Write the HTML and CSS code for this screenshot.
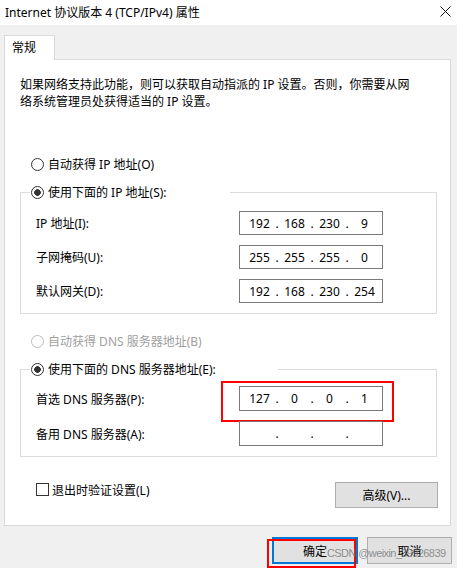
FILE: index.html
```html
<!DOCTYPE html>
<html lang="zh-CN">
<head>
<meta charset="utf-8">
<title>Internet 协议版本 4 (TCP/IPv4) 属性</title>
<link rel="stylesheet" href="styles.css">
</head>
<body>
<div class="window">
  <div class="titlebar">
    <span class="title">Internet 协议版本 4 (TCP/IPv4) 属性</span>
    <svg class="close" width="11" height="11" viewBox="0 0 11 11"><path d="M0.5 0.5 L10.5 10.5 M10.5 0.5 L0.5 10.5" stroke="#111" stroke-width="1" fill="none"/></svg>
  </div>
  <div class="tabs"><div class="tab">常规</div></div>
  <div class="panel">
    <p class="desc">如果网络支持此功能，则可以获取自动指派的 IP 设置。否则，你需要从网<br>络系统管理员处获得适当的 IP 设置。</p>
    <div class="radio-row"><span class="radio"></span>自动获得 IP 地址(O)</div>
    <fieldset class="group group-ip">
      <legend class="legend legend-ip"><span class="radio checked"></span>使用下面的 IP 地址(S):</legend>
      <div class="field-row"><span class="label">IP 地址(I):</span>
        <div class="ipbox"><span>192</span><i>.</i><span>168</span><i>.</i><span>230</span><i>.</i><span>9</span></div></div>
      <div class="field-row"><span class="label">子网掩码(U):</span>
        <div class="ipbox"><span>255</span><i>.</i><span>255</span><i>.</i><span>255</span><i>.</i><span>0</span></div></div>
      <div class="field-row"><span class="label">默认网关(D):</span>
        <div class="ipbox"><span>192</span><i>.</i><span>168</span><i>.</i><span>230</span><i>.</i><span>254</span></div></div>
    </fieldset>
    <div class="radio-row disabled"><span class="radio"></span>自动获得 DNS 服务器地址(B)</div>
    <fieldset class="group group-dns">
      <legend class="legend legend-dns"><span class="radio checked"></span>使用下面的 DNS 服务器地址(E):</legend>
      <div class="field-row"><span class="label">首选 DNS 服务器(P):</span>
        <div class="ipbox marked"><span>127</span><i>.</i><span>0</span><i>.</i><span>0</span><i>.</i><span>1</span></div></div>
      <div class="field-row"><span class="label">备用 DNS 服务器(A):</span>
        <div class="ipbox"><span></span><i>.</i><span></span><i>.</i><span></span><i>.</i><span></span></div></div>
    </fieldset>
    <div class="bottom-row">
      <div class="check-row"><span class="checkbox"></span>退出时验证设置(L)</div>
      <button class="btn btn-adv">高级(V)...</button>
    </div>
  </div>
  <div class="buttons">
    <button class="btn btn-ok">确定</button>
    <button class="btn btn-cancel">取消</button>
  </div>
  <span class="watermark">CSDN @weixin_39926839</span>
</div>
</body>
</html>
```
FILE: styles.css
```css
* { box-sizing: border-box; }
html, body { margin: 0; padding: 0; }
body {
  width: 457px;
  height: 568px;
  overflow: hidden;
  background: #f0f0f0;
  font-family: "Noto Sans", "Noto Sans CJK SC", sans-serif;
  font-size: 12px;
  color: #000;
}
.window { position: relative; width: 457px; height: 568px; }
.titlebar {
  height: 25px;
  background: #fff;
  display: flex;
  align-items: center;
  justify-content: space-between;
  padding: 0 6px 0 5px;
}
.title { line-height: 16px; }
.close { display: block; margin-top: -2px; }
.tabs { padding: 10px 0 0 4px; display: flex; }
.tab {
  width: 51px;
  height: 25px;
  margin-bottom: -1px;
  background: #fff;
  border: 1px solid #d9d9d9;
  border-bottom: none;
  padding: 4px 0 0 7px;
  line-height: 16px;
  position: relative;
  z-index: 1;
}
.panel {
  margin-left: 4px;
  width: 447px;
  height: 467px;
  background: #fff;
  border: 1px solid #d9d9d9;
  padding: 0 13px 0 15px;
}
.desc { margin: 16px 0 0; line-height: 17px; }
.radio-row {
  margin-top: 44px;
  height: 20px;
  display: flex;
  align-items: center;
  padding-left: 11px;
  gap: 4px;
}
.radio-row.disabled { margin-top: 17px; color: #a0a0a0; }
.radio {
  width: 13px;
  height: 13px;
  border: 1px solid #333;
  border-radius: 50%;
  background: #fff;
  flex: none;
}
.radio.checked { background: radial-gradient(circle, #333 0 3px, #fff 3.6px); }
.disabled .radio { border-color: #bcbcbc; }
.group {
  margin: 8px 0 0;
  padding: 9px 0 10px 15px;
  border: 1px solid #dcdcdc;
  min-width: 0;
}
.group-dns { padding-top: 7px; }
.legend {
  margin-left: -6px;
  padding: 0 0 0 1px;
  height: 20px;
  display: flex;
  align-items: center;
  gap: 4px;
}
.legend-ip { width: 200px; }
.legend-dns { width: 248px; }
.field-row {
  display: grid;
  grid-template-columns: 203px 144px;
  align-items: center;
  height: 24px;
  margin-top: 10px;
}
.field-row:first-of-type { margin-top: 0; }
.group-dns .field-row { height: 25px; }
.ipbox {
  height: 100%;
  border: 1px solid #7a7a7a;
  display: grid;
  grid-template-columns: 27px 8px 27px 8px 27px 8px 27px;
  align-items: center;
  padding-left: 6px;
  text-align: center;
  font-family: "Noto Sans", sans-serif;
  position: relative;
}
.ipbox i { font-style: normal; }
.ipbox.marked::after {
  content: "";
  position: absolute;
  left: -19px;
  top: -6px;
  width: 169px;
  height: 37px;
  border: 2px solid #f00;
}
.bottom-row {
  margin-top: 25px;
  display: flex;
  justify-content: space-between;
  align-items: flex-start;
  padding-left: 16px;
}
.check-row {
  display: flex;
  align-items: center;
  gap: 3px;
  height: 15px;
}
.checkbox {
  width: 13px;
  height: 13px;
  border: 1px solid #333;
  background: #fff;
}
.btn {
  font: inherit;
  color: #000;
  background: #e1e1e1;
  border: 1px solid #adadad;
  padding: 0;
  margin: 0;
}
.btn-adv { width: 103px; height: 26px; margin-right: -1px; }
.buttons {
  margin-top: 11px;
  display: flex;
  justify-content: flex-end;
  gap: 9px;
  padding-right: 5px;
}
.btn-ok, .btn-cancel { height: 27px; }
.btn-ok {
  width: 86px;
  border: 2px solid #0078d7;
  position: relative;
}
.btn-ok::after {
  content: "";
  position: absolute;
  left: -7px;
  top: 0;
  width: 85px;
  height: 25px;
  border: 2px solid #f00;
}
.btn-cancel { width: 85px; }
.watermark {
  position: absolute;
  z-index: 5;
  left: 327px;
  top: 546px;
  white-space: nowrap;
  font-family: "Liberation Sans", sans-serif;
  font-size: 11px;
  letter-spacing: -0.6px;
  line-height: 14px;
  color: rgba(110, 110, 110, 0.75);
  pointer-events: none;
}
```
